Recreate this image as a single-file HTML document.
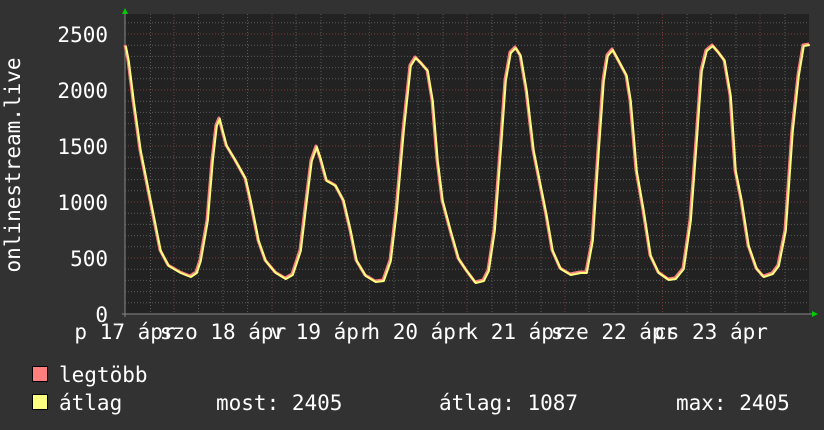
<!DOCTYPE html>
<html><head><meta charset="utf-8"><style>
html,body{margin:0;padding:0;background:#323232;}
svg{display:block}
text{font-family:"DejaVu Sans Mono","Liberation Mono",monospace;fill:#fff;font-size:21px}
</style></head><body>
<svg width="824" height="430" viewBox="0 0 824 430" xmlns="http://www.w3.org/2000/svg">
<rect width="824" height="430" fill="#323232"/>
<rect x="125" y="14" width="684" height="300" fill="#222"/>
<g stroke="#5a5a5a" stroke-width="1" stroke-dasharray="1,2">
<line x1="125" x2="809" y1="22.7" y2="22.7"/><line x1="125" x2="809" y1="45.2" y2="45.2"/><line x1="125" x2="809" y1="56.4" y2="56.4"/><line x1="125" x2="809" y1="67.6" y2="67.6"/><line x1="125" x2="809" y1="78.8" y2="78.8"/>
<line x1="125" x2="809" y1="101.2" y2="101.2"/><line x1="125" x2="809" y1="112.4" y2="112.4"/><line x1="125" x2="809" y1="123.6" y2="123.6"/><line x1="125" x2="809" y1="134.8" y2="134.8"/>
<line x1="125" x2="809" y1="157.2" y2="157.2"/><line x1="125" x2="809" y1="168.4" y2="168.4"/><line x1="125" x2="809" y1="179.6" y2="179.6"/><line x1="125" x2="809" y1="190.8" y2="190.8"/>
<line x1="125" x2="809" y1="213.2" y2="213.2"/><line x1="125" x2="809" y1="224.4" y2="224.4"/><line x1="125" x2="809" y1="235.6" y2="235.6"/><line x1="125" x2="809" y1="246.8" y2="246.8"/>
<line x1="125" x2="809" y1="269.2" y2="269.2"/><line x1="125" x2="809" y1="280.4" y2="280.4"/><line x1="125" x2="809" y1="291.6" y2="291.6"/><line x1="125" x2="809" y1="302.8" y2="302.8"/>
<line y1="14" y2="314" x1="150.5" x2="150.5"/><line y1="14" y2="314" x1="198.5" x2="198.5"/><line y1="14" y2="314" x1="223" x2="223"/><line y1="14" y2="314" x1="247.5" x2="247.5"/>
<line y1="14" y2="314" x1="296" x2="296"/><line y1="14" y2="314" x1="321" x2="321"/><line y1="14" y2="314" x1="345" x2="345"/>
<line y1="14" y2="314" x1="394" x2="394"/><line y1="14" y2="314" x1="418" x2="418"/><line y1="14" y2="314" x1="443" x2="443"/>
<line y1="14" y2="314" x1="492" x2="492"/><line y1="14" y2="314" x1="516" x2="516"/><line y1="14" y2="314" x1="541" x2="541"/>
<line y1="14" y2="314" x1="589" x2="589"/><line y1="14" y2="314" x1="614" x2="614"/><line y1="14" y2="314" x1="638" x2="638"/>
<line y1="14" y2="314" x1="687" x2="687"/><line y1="14" y2="314" x1="711" x2="711"/><line y1="14" y2="314" x1="736" x2="736"/>
<line y1="14" y2="314" x1="785" x2="785"/>
</g>
<g stroke="#7a3a3a" stroke-width="1" stroke-dasharray="1,2">
<line x1="125" x2="809" y1="34" y2="34"/><line x1="125" x2="809" y1="90" y2="90"/><line x1="125" x2="809" y1="146" y2="146"/><line x1="125" x2="809" y1="202" y2="202"/><line x1="125" x2="809" y1="258" y2="258"/>
<line y1="14" y2="314" x1="174" x2="174"/><line y1="14" y2="314" x1="272" x2="272"/><line y1="14" y2="314" x1="369.5" x2="369.5"/><line y1="14" y2="314" x1="467" x2="467"/><line y1="14" y2="314" x1="565" x2="565"/><line y1="14" y2="314" x1="662.5" x2="662.5"/><line y1="14" y2="314" x1="760" x2="760"/>
</g>
<line x1="122" x2="812" y1="314" y2="314" stroke="#888" stroke-width="1"/>
<line x1="125" x2="125" y1="11" y2="317" stroke="#888" stroke-width="1"/>
<polygon points="122,14 128,14 125,8" fill="#0c0"/>
<polygon points="812,311 812,317 818,314" fill="#0c0"/>
<g fill="none" stroke-linejoin="round">
<polyline id="c" stroke="#ff7f7f" stroke-width="3" points="125,45 128,60 133,100 140,150 150,200 160,250 168,265 180,272 190,276 196,272 200,260 207,220 212,160 216,125 219,118 222,130 226,145 235,160 245,178 250,200 258,240 265,260 275,272 285,278 292,274 300,250 306,200 311,160 316,146 320,158 326,180 335,185 343,200 350,230 356,260 365,275 375,281 383,280 390,260 396,210 403,130 410,65 415,57 420,62 427,70 432,100 437,160 442,200 450,230 458,258 466,270 475,282 483,280 488,270 494,230 500,150 505,80 510,52 515,47 520,55 526,90 533,150 540,185 546,215 552,250 560,268 570,274 580,272 586,272 592,240 598,150 603,80 607,55 612,49 618,60 626,75 630,100 636,170 643,210 650,255 658,272 668,279 675,278 683,268 690,220 696,140 701,70 706,50 712,45 718,52 724,60 730,95 735,170 741,200 748,245 756,268 763,276 772,273 778,265 785,230 792,130 798,75 803,45 809,44"/>
<polyline stroke="#ffff7f" stroke-width="2" transform="translate(0.8,1)" points="125,45 128,60 133,100 140,150 150,200 160,250 168,265 180,272 190,276 196,272 200,260 207,220 212,160 216,125 219,118 222,130 226,145 235,160 245,178 250,200 258,240 265,260 275,272 285,278 292,274 300,250 306,200 311,160 316,146 320,158 326,180 335,185 343,200 350,230 356,260 365,275 375,281 383,280 390,260 396,210 403,130 410,65 415,57 420,62 427,70 432,100 437,160 442,200 450,230 458,258 466,270 475,282 483,280 488,270 494,230 500,150 505,80 510,52 515,47 520,55 526,90 533,150 540,185 546,215 552,250 560,268 570,274 580,272 586,272 592,240 598,150 603,80 607,55 612,49 618,60 626,75 630,100 636,170 643,210 650,255 658,272 668,279 675,278 683,268 690,220 696,140 701,70 706,50 712,45 718,52 724,60 730,95 735,170 741,200 748,245 756,268 763,276 772,273 778,265 785,230 792,130 798,75 803,45 809,44"/>
</g>
<g text-anchor="end">
<text x="108" y="42">2500</text><text x="108" y="98">2000</text><text x="108" y="154">1500</text>
<text x="108" y="210">1000</text><text x="108" y="266">500</text><text x="108" y="322">0</text>
</g>
<text transform="translate(20,165) rotate(-90)" text-anchor="middle">onlinestream.live</text>
<g text-anchor="middle">
<text x="125" y="339">p 17 ápr</text><text x="223" y="339">szo 18 ápr</text><text x="321" y="339">v 19 ápr</text>
<text x="418" y="339">h 20 ápr</text><text x="516" y="339">k 21 ápr</text><text x="614" y="339">sze 22 ápr</text><text x="711" y="339">cs 23 ápr</text>
</g>
<rect x="32.5" y="366.5" width="15" height="15" fill="#ff7f7f" stroke="#000"/>
<rect x="32.5" y="394.5" width="15" height="15" fill="#ffff7f" stroke="#000"/>
<text x="59" y="382">legtöbb</text>
<text x="59" y="410">átlag</text>
<text x="216" y="410">most: 2405</text>
<text x="439" y="410">átlag: 1087</text>
<text x="676" y="410">max: 2405</text>
</svg>
</body></html>
